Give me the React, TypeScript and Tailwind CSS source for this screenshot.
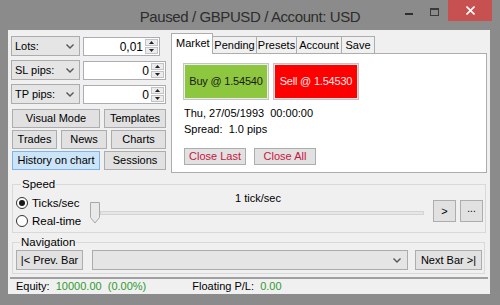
import React from "react";

const Chevron = () => (
  <svg width="8" height="5" viewBox="0 0 8 5" className="shrink-0">
    <polyline points="0.5,0.5 4,4 7.5,0.5" fill="none" stroke="#555" strokeWidth="1.4" />
  </svg>
);

const Select = ({ label }: { label: string }) => (
  <div className="w-[69px] h-[20px] border border-[#acacac] bg-[#e5e5e5] flex items-center justify-between pl-[3px] pr-[5px]">
    <span>{label}</span>
    <Chevron />
  </div>
);

const Tri = ({ up }: { up: boolean }) => (
  <svg width="5" height="3" viewBox="0 0 5 3">
    <polygon points={up ? "0,3 5,3 2.5,0" : "0,0 5,0 2.5,3"} fill="#222" />
  </svg>
);

const Spin = ({ value, w }: { value: string; w: string }) => (
  <div className={`${w} h-[19px] border border-[#abadb3] bg-white flex items-stretch pr-[1px] py-[1px]`}>
    <span className="flex-1 text-right pr-[2px] leading-[17px] text-[12px]">{value}</span>
    <div className="w-[13px] flex flex-col gap-[1px]">
      <div className="flex-1 border border-[#c3c3c3] bg-[#ececec] flex items-center justify-center">
        <Tri up />
      </div>
      <div className="flex-1 border border-[#c3c3c3] bg-[#ececec] flex items-center justify-center">
        <Tri up={false} />
      </div>
    </div>
  </div>
);

const Btn = ({ children, className = "" }: { children: React.ReactNode; className?: string }) => (
  <div
    className={`flex items-center justify-center whitespace-nowrap border ${className.includes("border-[") ? "" : "border-[#adadad]"} ${className.includes("bg-[") ? "" : "bg-[#e1e1e1]"} ${className}`}
  >
    {children}
  </div>
);

const Radio = ({ checked, label }: { checked: boolean; label: string }) => (
  <div className="h-[16px] flex items-center gap-[4px] text-[11.5px]">
    <div className="w-[12px] h-[12px] rounded-full border border-[#333] bg-white flex items-center justify-center">
      {checked && <div className="w-[6px] h-[6px] rounded-full bg-[#1a1a1a]" />}
    </div>
    <span>{label}</span>
  </div>
);

export default function App() {
  const tabs = [
    { t: "Pending", w: "w-[45px]" },
    { t: "Presets", w: "w-[41px]" },
    { t: "Account", w: "w-[46px]" },
    { t: "Save", w: "w-[34px]" },
  ];
  return (
    <div className="w-[500px] h-[305px] bg-[#8b8b8b] flex flex-col font-['Liberation_Sans',Arial,sans-serif] text-[11px] text-black leading-[13px] overflow-hidden">
      {/* Title bar */}
      <div className="h-[30px] grid grid-cols-[1fr_auto_1fr] shrink-0">
        <div />
        <div className="pt-[8px] text-[15px] leading-[17px] tracking-[-0.4px] text-[#2d2d2d]">
          Paused / GBPUSD / Account: USD
        </div>
        <div className="flex justify-end items-start pr-[8px]">
          <div className="mt-[13px] w-[8px] h-[2px] bg-[#2d2d2d]" />
          <div className="ml-[17px] mt-[8px] w-[9px] h-[8px] border border-[#3a3a3a] border-t-2" />
          <div className="ml-[9px] w-[44px] h-[21px] bg-[#c75050] flex items-center justify-center">
            <svg width="9" height="9" viewBox="0 0 9 9">
              <line x1="0.5" y1="0.5" x2="8.5" y2="8.5" stroke="#fff" strokeWidth="1.6" />
              <line x1="8.5" y1="0.5" x2="0.5" y2="8.5" stroke="#fff" strokeWidth="1.6" />
            </svg>
          </div>
        </div>
      </div>

      {/* Client area */}
      <div className="ml-[8px] w-[482px] h-[264px] bg-[#f0f0f0] flex flex-col shrink-0">
        {/* Top section */}
        <div className="flex items-start pl-[3px]">
          {/* Left column */}
          <div className="mt-[6px] w-[155px] flex flex-col">
            <div className="flex flex-col gap-[4px]">
              <div className="flex items-center gap-[3px]">
                <Select label="Lots:" />
                <Spin value="0,01" w="w-[77px]" />
              </div>
              <div className="flex items-center gap-[3px]">
                <Select label="SL pips:" />
                <Spin value="0" w="w-[83px]" />
              </div>
              <div className="flex items-center gap-[3px]">
                <Select label="TP pips:" />
                <Spin value="0" w="w-[83px]" />
              </div>
            </div>
            <div className="mt-[5px] ml-[1px] w-[154px] flex flex-col gap-[2px]">
              <div className="flex gap-[4px] h-[19px]">
                <Btn className="w-[88px]">Visual Mode</Btn>
                <Btn className="w-[62px]">Templates</Btn>
              </div>
              <div className="flex gap-[4px] h-[19px]">
                <Btn className="w-[45px]">Trades</Btn>
                <Btn className="w-[46px]">News</Btn>
                <Btn className="w-[55px]">Charts</Btn>
              </div>
              <div className="flex gap-[4px] h-[19px]">
                <Btn className="w-[88px] bg-[#cce4f7] border-[#7eb4ea]">History on chart</Btn>
                <Btn className="w-[62px]">Sessions</Btn>
              </div>
            </div>
          </div>

          {/* Tab control */}
          <div className="ml-[5px] mt-[3px] w-[316px] flex flex-col">
            <div className="h-[20px] flex items-end">
              <div className="relative z-10 w-[42px] h-[21px] -mb-[1px] border border-b-0 border-[#adadad] bg-white pl-[4px] pt-[3px]">
                Market
              </div>
              {tabs.map((t) => (
                <div
                  key={t.t}
                  className={`${t.w} h-[17px] border border-b-0 border-[#adadad] bg-[#f0f0f0] -ml-[1px] first:ml-0 flex items-center justify-center`}
                >
                  {t.t}
                </div>
              ))}
            </div>
            <div className="h-[120px] border border-[#adadad] bg-white pl-[11px] pt-[9px] flex flex-col">
              <div className="flex gap-[4px]">
                <div className="w-[86px] h-[37px] border border-[#c4c4c4] p-[1px] bg-[#ececec]">
                  <div className="w-full h-full bg-[#8dc63f] flex items-center justify-center whitespace-nowrap tracking-[-0.2px] text-[#1a1a1a]">
                    Buy @ 1.54540
                  </div>
                </div>
                <div className="w-[86px] h-[37px] border border-[#c4c4c4] p-[1px] bg-[#f2dcdc]">
                  <div className="w-full h-full bg-[#fe0000] flex items-center justify-center whitespace-nowrap tracking-[-0.2px] text-[#fde8e8]">
                    Sell @ 1.54530
                  </div>
                </div>
              </div>
              <div className="mt-[7px] pl-[1px] whitespace-pre">Thu, 27/05/1993  00:00:00</div>
              <div className="mt-[3px] pl-[1px] whitespace-pre">Spread:  1.0 pips</div>
              <div className="mt-[12px] pl-[1px] flex gap-[8px]">
                <Btn className="w-[62px] h-[17px] text-[#c8163f]">Close Last</Btn>
                <Btn className="w-[62px] h-[17px] text-[#c8163f]">Close All</Btn>
              </div>
            </div>
          </div>
        </div>

        {/* Speed group */}
        <fieldset className="mt-[5px] ml-[4px] w-[473px] h-[55px] border border-[#d9d9d9] pl-[3px] pr-[2px]">
          <legend className="ml-[5px] px-[1px] text-[11.5px] leading-[13px]">Speed</legend>
          <div className="flex items-start">
            <div className="w-[74px] pt-[4px] flex flex-col gap-[2px]">
              <Radio checked label="Ticks/sec" />
              <Radio checked={false} label="Real-time" />
            </div>
            <div className="w-[336px] flex flex-col">
              <div className="text-center pt-[1px]">1 tick/sec</div>
              <div className="-mt-[3px] h-[22px] flex items-center">
                <svg width="10" height="22" viewBox="0 0 10 22" className="shrink-0">
                  <polygon points="0.5,0.5 9.5,0.5 9.5,15.5 5,21 0.5,15.5" fill="#e9e9e9" stroke="#a8a8a8" />
                </svg>
                <div className="flex-1 h-[4px] border border-[#d4d4d4] bg-[#e6e6e6] mr-[2px]" />
              </div>
            </div>
            <div className="ml-[7px] mt-[9px] flex gap-[4px]">
              <Btn className="w-[23px] h-[22px]">&gt;</Btn>
              <Btn className="w-[23px] h-[22px] items-end pb-[6px] text-[10px]">...</Btn>
            </div>
          </div>
        </fieldset>

        {/* Navigation group */}
        <fieldset className="mt-[3px] ml-[4px] w-[473px] h-[38px] border border-[#d9d9d9] pl-[3px] pr-[2px]">
          <legend className="ml-[4px] px-[1px] text-[11.5px] leading-[13px]">Navigation</legend>
          <div className="mt-[1px] flex items-center">
            <Btn className="w-[67px] h-[20px]">|&lt; Prev. Bar</Btn>
            <div className="ml-[9px] w-[316px] h-[20px] border border-[#acacac] bg-[#e5e5e5] flex items-center justify-end pr-[6px]">
              <Chevron />
            </div>
            <Btn className="ml-[7px] w-[67px] h-[20px]">Next Bar &gt;|</Btn>
          </div>
        </fieldset>

        {/* Status bar */}
        <div className="mt-[3px] mx-[2px] border-t-2 border-[#a0a0a0] flex-1 flex items-center pl-[6px] whitespace-pre">
          <span>Equity:  </span>
          <span className="text-[#2f9a2f]">10000.00  (0.00%)</span>
          <span className="ml-[46px]">Floating P/L:  </span>
          <span className="text-[#2f9a2f]">0.00</span>
        </div>
      </div>
    </div>
  );
}
